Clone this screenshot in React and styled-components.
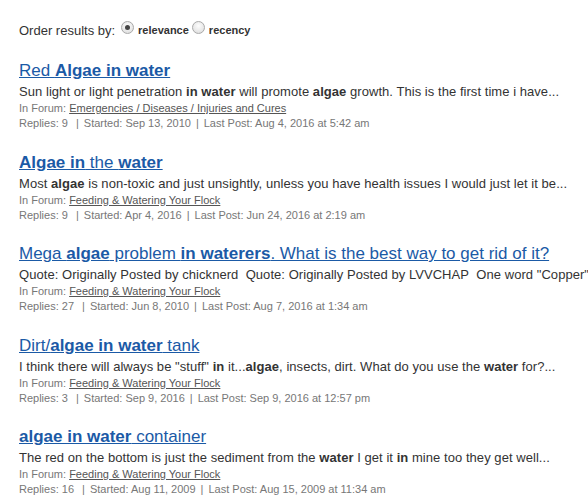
import React from 'react';
import styled, { createGlobalStyle } from 'styled-components';

const Global = createGlobalStyle`
    body {
        margin: 0;
        background: #fff;
        font-family: "Liberation Sans", Arial, sans-serif;
    }
`;

const Page = styled.div`
    padding: 20px 19px 0 19px;
`;

const OrderBar = styled.div`
    display: flex;
    align-items: center;
    font-size: 13px;
    color: #333;
    height: 20px;
    margin-bottom: 21px;
`;

const OrderLabel = styled.span`
    margin-right: 6px;
`;

const Radio = styled.span`
    display: inline-block;
    box-sizing: border-box;
    width: 13px;
    height: 13px;
    border-radius: 50%;
    border: 1px solid #a9a9a9;
    background: radial-gradient(circle at 50% 35%, #fdfdfd 0%, #e4e4e4 70%, #d6d6d6 100%);
    position: relative;
    top: -3px;
    margin-right: 4px;

    &::after {
        content: '';
        display: ${p => (p.checked ? 'block' : 'none')};
        position: absolute;
        left: 3px;
        top: 3px;
        width: 5px;
        height: 5px;
        border-radius: 50%;
        background: #444;
    }
`;

const RadioLabel = styled.span`
    font-size: 11px;
    font-weight: bold;
    color: #333;
    margin-right: 3px;
`;

const Result = styled.div`
    height: 91.5px;
`;

const Title = styled.a`
    display: inline-block;
    font-size: 17px;
    line-height: 20px;
    color: #1b5aa6;
    text-decoration: underline;
    margin-bottom: 3px;

    b {
        font-weight: bold;
    }
`;

const Snippet = styled.div`
    font-size: 13px;
    line-height: 16px;
    color: #333;
    white-space: nowrap;
    letter-spacing: 0.05px;
    margin-bottom: 1px;
`;

const Meta = styled.div`
    font-size: 11px;
    line-height: 15px;
    color: #777;
    white-space: nowrap;
`;

const ForumLink = styled.a`
    color: #555;
    text-decoration: underline;
`;

const Sep = styled.span`
    margin: 0 5px;
`;

const results = [
    {
        title: <>Red <b>Algae in water</b></>,
        snippet: <>Sun light or light penetration <b>in water</b> will promote <b>algae</b> growth. This is the first time i have...</>,
        forum: 'Emergencies / Diseases / Injuries and Cures',
        replies: '9', started: 'Sep 13, 2010', last: 'Aug 4, 2016 at 5:42 am',
    },
    {
        title: <><b>Algae in</b> the <b>water</b></>,
        snippet: <>Most <b>algae</b> is non-toxic and just unsightly, unless you have health issues I would just let it be...</>,
        forum: 'Feeding & Watering Your Flock',
        replies: '9', started: 'Apr 4, 2016', last: 'Jun 24, 2016 at 2:19 am',
    },
    {
        title: <>Mega <b>algae</b> problem <b>in waterers</b>. What is the best way to get rid of it?</>,
        snippet: <>Quote: Originally Posted by chicknerd&nbsp; Quote: Originally Posted by LVVCHAP&nbsp; One word "Copper"</>,
        forum: 'Feeding & Watering Your Flock',
        replies: '27', started: 'Jun 8, 2010', last: 'Aug 7, 2016 at 1:34 am',
    },
    {
        title: <>Dirt/<b>algae in water</b> tank</>,
        snippet: <>I think there will always be "stuff" <b>in</b> it...<b>algae</b>, insects, dirt. What do you use the <b>water</b> for?...</>,
        forum: 'Feeding & Watering Your Flock',
        replies: '3', started: 'Sep 9, 2016', last: 'Sep 9, 2016 at 12:57 pm',
    },
    {
        title: <><b>algae in water</b> container</>,
        snippet: <>The red on the bottom is just the sediment from the <b>water</b> I get it <b>in</b> mine too they get well...</>,
        forum: 'Feeding & Watering Your Flock',
        replies: '16', started: 'Aug 11, 2009', last: 'Aug 15, 2009 at 11:34 am',
    },
];

const App = () => {
    return (
        <Page>
            <Global />
            <OrderBar>
                <OrderLabel>Order results by:</OrderLabel>
                <Radio checked />
                <RadioLabel>relevance</RadioLabel>
                <Radio />
                <RadioLabel>recency</RadioLabel>
            </OrderBar>
            {results.map((r, i) => (
                <Result key={i}>
                    <Title href="#">{r.title}</Title>
                    <Snippet>{r.snippet}</Snippet>
                    <Meta>In Forum: <ForumLink href="#">{r.forum}</ForumLink></Meta>
                    <Meta>
                        Replies: {r.replies}&nbsp;<Sep>|</Sep>Started: {r.started}<Sep>|</Sep>Last Post: {r.last}
                    </Meta>
                </Result>
            ))}
        </Page>
    );
};

export default App;
